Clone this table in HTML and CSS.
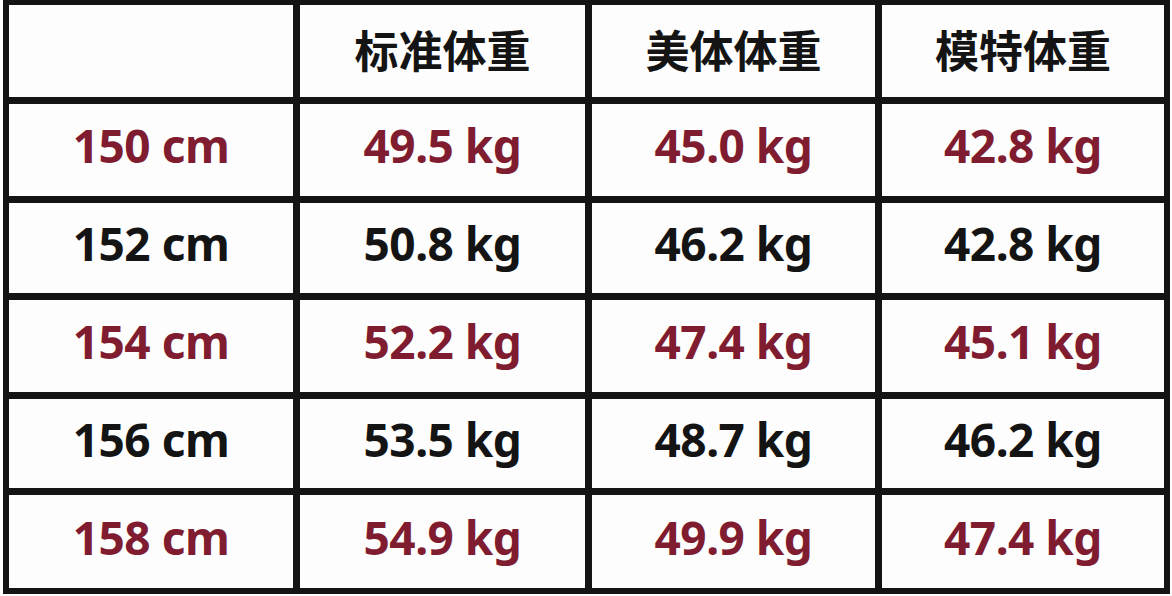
FILE: index.html
```html
<!DOCTYPE html>
<html lang="zh">
<head>
<meta charset="utf-8">
<link rel="stylesheet" href="styles.css">
</head>
<body>
<div class="table">
  <div class="cell head"></div>
  <div class="cell head">标准体重</div>
  <div class="cell head">美体体重</div>
  <div class="cell head">模特体重</div>

  <div class="cell red">150 cm</div>
  <div class="cell red">49.5 kg</div>
  <div class="cell red">45.0 kg</div>
  <div class="cell red">42.8 kg</div>

  <div class="cell">152 cm</div>
  <div class="cell">50.8 kg</div>
  <div class="cell">46.2 kg</div>
  <div class="cell">42.8 kg</div>

  <div class="cell red">154 cm</div>
  <div class="cell red">52.2 kg</div>
  <div class="cell red">47.4 kg</div>
  <div class="cell red">45.1 kg</div>

  <div class="cell">156 cm</div>
  <div class="cell">53.5 kg</div>
  <div class="cell">48.7 kg</div>
  <div class="cell">46.2 kg</div>

  <div class="cell red">158 cm</div>
  <div class="cell red">54.9 kg</div>
  <div class="cell red">49.9 kg</div>
  <div class="cell red">47.4 kg</div>
</div>
</body>
</html>
```

FILE: styles.css
```css
html, body {
  margin: 0;
  padding: 0;
  background: #fefefe;
}

body {
  width: 1172px;
  height: 596px;
  overflow: hidden;
}

.table {
  margin-left: 3px;
  width: 1167px;
  box-sizing: border-box;
  padding: 5px 6px 6px 6px;
  background: #141414;
  display: grid;
  grid-template-columns: 284px 285px 283px 282px;
  grid-template-rows: 92px 92px 90px 92px 89px 93px;
  column-gap: 7px;
  row-gap: 7px;
  font-family: "Noto Sans", "Noto Sans CJK SC", sans-serif;
  font-weight: 700;
  font-size: 46px;
  color: #141414;
}

.cell {
  background: #fdfdfd;
  display: flex;
  align-items: center;
  justify-content: center;
  padding-bottom: 10px;
  box-sizing: border-box;
  letter-spacing: -0.5px;
}

.head {
  font-family: "Noto Sans CJK SC", sans-serif;
  font-size: 44px;
  padding-bottom: 4px;
  letter-spacing: 0;
}

.red {
  color: #801c30;
}
```
